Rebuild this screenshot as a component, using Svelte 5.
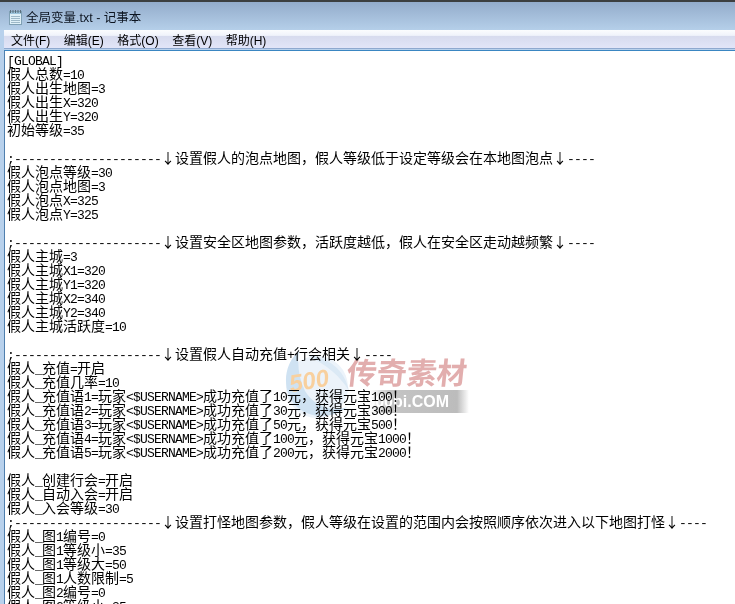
<script>
    const lines = [
        "[GLOBAL]",
        "假人总数=10",
        "假人出生地图=3",
        "假人出生X=320",
        "假人出生Y=320",
        "初始等级=35",
        "",
        ";---------------------↓设置假人的泡点地图，假人等级低于设定等级会在本地图泡点↓----",
        "假人泡点等级=30",
        "假人泡点地图=3",
        "假人泡点X=325",
        "假人泡点Y=325",
        "",
        ";---------------------↓设置安全区地图参数，活跃度越低，假人在安全区走动越频繁↓----",
        "假人主城=3",
        "假人主城X1=320",
        "假人主城Y1=320",
        "假人主城X2=340",
        "假人主城Y2=340",
        "假人主城活跃度=10",
        "",
        ";---------------------↓设置假人自动充值+行会相关↓----",
        "假人_充值=开启",
        "假人_充值几率=10",
        "假人_充值语1=玩家<$USERNAME>成功充值了10元，获得元宝100！",
        "假人_充值语2=玩家<$USERNAME>成功充值了30元，获得元宝300！",
        "假人_充值语3=玩家<$USERNAME>成功充值了50元，获得元宝500！",
        "假人_充值语4=玩家<$USERNAME>成功充值了100元，获得元宝1000！",
        "假人_充值语5=玩家<$USERNAME>成功充值了200元，获得元宝2000！",
        "",
        "假人_创建行会=开启",
        "假人_自动入会=开启",
        "假人_入会等级=30",
        ";---------------------↓设置打怪地图参数，假人等级在设置的范围内会按照顺序依次进入以下地图打怪↓----",
        "假人_图1编号=0",
        "假人_图1等级小=35",
        "假人_图1等级大=50",
        "假人_图1人数限制=5",
        "假人_图2编号=0",
        "假人_图2等级小=35",
    ];

    // half-width runs get their own font so they sit on the 7px grid
    function runs(line) {
        return line.match(/[\x20-\x7e]+|[^\x20-\x7e]+/g) ?? [];
    }

    const menus = ["文件(F)", "编辑(E)", "格式(O)", "查看(V)", "帮助(H)"];
</script>

<div class="window" lang="zh-CN">
    <div class="titlebar">
        <svg class="icon" width="16" height="16" viewBox="0 0 16 16">
            <rect x="2.5" y="2.5" width="12" height="13" fill="#dff0f8" stroke="#7fa0b4" />
            <rect x="3" y="3" width="11" height="2" fill="#9cc4dc" />
            <path d="M4 7.5h9M4 9.5h9M4 11.5h9M4 13.5h9" stroke="#9db8c8" />
            <path d="M3.5 1v3M6 1v3M8.5 1v3M11 1v3M13.5 1v3" stroke="#5b6f7c" />
        </svg>
        <span class="title">全局变量.txt - 记事本</span>
    </div>
    <div class="menubar">
        {#each menus as menu}
            <span class="menu">{menu}</span>
        {/each}
    </div>
    <div class="editor">
        {#each lines as line}
            <div class="line">{#each runs(line) as run}{#if /^[\x20-\x7e]/.test(run)}<span class="half">{run}</span>{:else}{run}{/if}{/each}</div>
        {/each}

        <div class="watermark">
            <svg class="bird" width="70" height="72" viewBox="0 0 70 72">
                <circle cx="34" cy="38" r="31" fill="#ecf3fa" />
                <path d="M16 2C0 16-2 42 14 58c14 12 36 12 50 0C48 64 30 56 22 42 16 30 14 16 16 2Z" fill="#cfe2f2" />
                <path d="M24 6c20 2 38 14 42 36-8-14-22-26-42-36Z" fill="#dbe9f5" />
            </svg>
            <span class="five">500</span>
            <span class="brand">传奇素材</span>
            <div class="brush"><span>500pi.COM</span></div>
        </div>
    </div>
</div>

<style>
    :global(body) {
        overflow: hidden;
    }

    .window {
        width: 735px;
        height: 604px;
        overflow: hidden;
        display: flex;
        flex-direction: column;
        padding-left: 4px;
        box-sizing: border-box;
        background: #b8d1ec;
        font-family: "Noto Sans CJK SC", sans-serif;
        color: #000;
    }

    .titlebar {
        flex: none;
        box-sizing: border-box;
        height: 30px;
        margin-left: -4px;
        padding: 1px 0 0 7px;
        border-top: 2px solid #3c3f40;
        display: flex;
        align-items: center;
        gap: 3px;
        background: linear-gradient(#93accb, #b5cfe9);
        font-size: 12.5px;
    }

    .title {
        font-family: "Liberation Sans", "Noto Sans CJK SC", sans-serif;
        color: #0c1420;
    }

    .menubar {
        flex: none;
        height: 18px;
        margin-bottom: 1px;
        padding-left: 7px;
        display: flex;
        align-items: center;
        gap: 13.5px;
        font-size: 12px;
        font-family: "Liberation Sans", "Noto Sans CJK SC", sans-serif;
        background: linear-gradient(#fbfcfe 0, #f0f3fb 30%, #d7dbee 35%, #e2e5f8 100%);
        border-bottom: 1px solid #8fa9cf;
    }

    .editor {
        position: relative;
        flex: 1;
        min-height: 0;
        border-top: 1px solid #3a86c2;
        border-left: 1px solid #4f7fae;
        padding: 1px 0 0 2px;
        background: #fff;
    }

    .line {
        height: 14px;
        line-height: 14px;
        font-size: 14px;
        white-space: pre;
    }

    .half {
        font-family: "Liberation Mono", monospace;
        font-size: 13px;
        letter-spacing: -0.8px;
    }

    .watermark {
        position: absolute;
        left: 278px;
        top: 298px;
        width: 190px;
        height: 76px;
        pointer-events: none;
        mix-blend-mode: multiply;
    }

    .bird {
        position: absolute;
        left: 0;
        top: 0;
    }

    .five {
        position: absolute;
        left: 6px;
        top: 18px;
        font-family: "Liberation Sans", sans-serif;
        font-size: 24px;
        font-weight: bold;
        font-style: italic;
        color: #f8d09e;
        transform: rotate(-10deg);
    }

    .brand {
        position: absolute;
        left: 64px;
        top: 4px;
        font-size: 30px;
        line-height: 36px;
        font-weight: bold;
        color: #e2aeae;
        transform: skewX(-6deg);
        white-space: nowrap;
    }

    .brush {
        position: absolute;
        left: 87px;
        top: 41px;
        width: 99px;
        height: 23px;
        display: flex;
        align-items: center;
        justify-content: flex-end;
        padding-right: 20px;
        box-sizing: border-box;
        background: linear-gradient(90deg, #ffffff, #c4c4c4 20%, #bcbcbc 88%, #ffffff);
    }

    .brush span {
        font-family: "Liberation Sans", sans-serif;
        font-size: 16px;
        font-weight: bold;
        color: #fff;
        white-space: nowrap;
    }
</style>
